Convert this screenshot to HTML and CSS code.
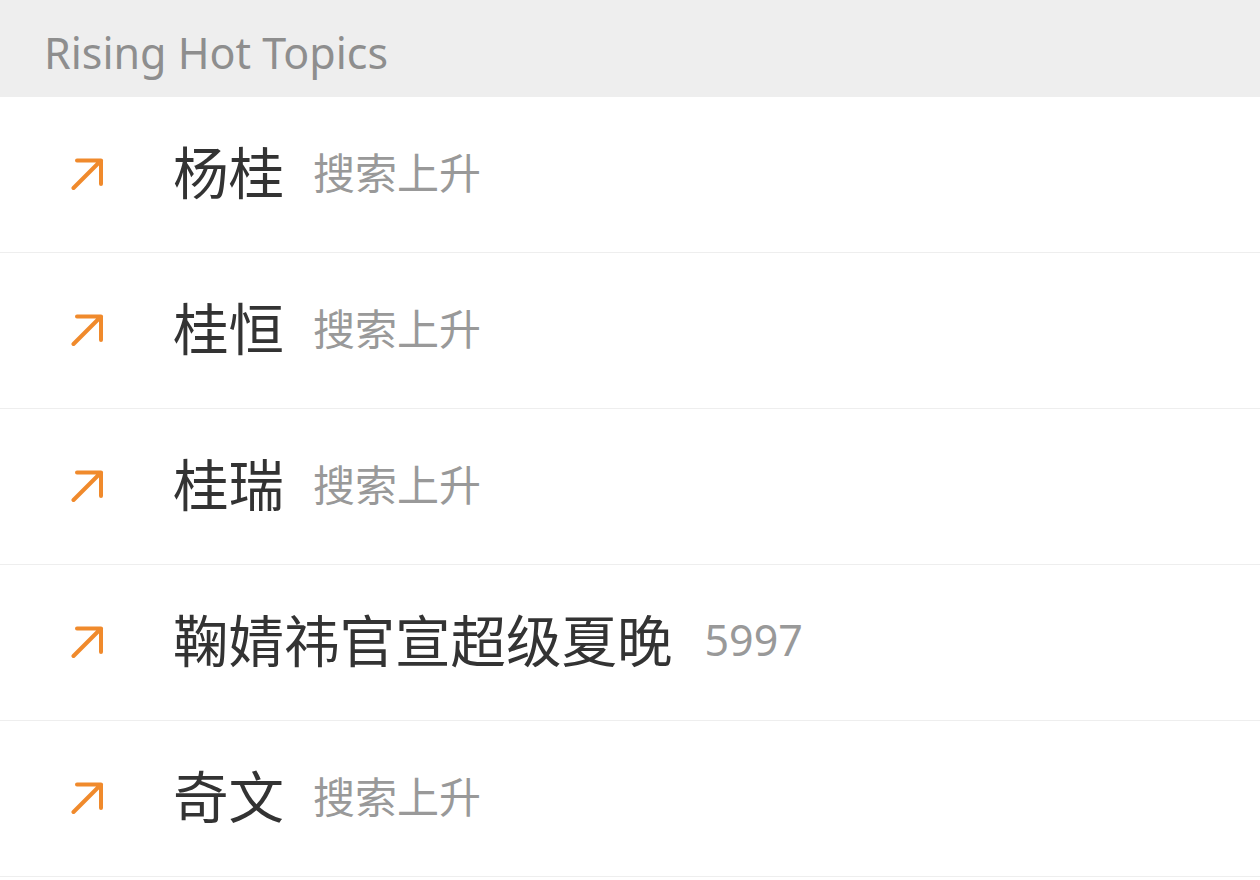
FILE: index.html
```html
<!DOCTYPE html>
<html lang="zh-CN">
<head>
    <meta charset="UTF-8">
    <meta name="viewport" content="width=device-width, initial-scale=1.0">
    <title>Rising Hot Topics</title>
    <link rel="stylesheet" href="styles.css">
</head>
<body>
    <header class="section-header">
        <h1>Rising Hot Topics</h1>
    </header>

    <ul class="topic-list">
        <li class="topic">
            <svg class="topic-icon" viewBox="0 0 34 34"><path d="M6 2.5H30V26M30 2.5L2.5 30"/></svg>
            <span class="topic-title">杨桂</span>
            <span class="topic-note">搜索上升</span>
        </li>
        <li class="topic">
            <svg class="topic-icon" viewBox="0 0 34 34"><path d="M6 2.5H30V26M30 2.5L2.5 30"/></svg>
            <span class="topic-title">桂恒</span>
            <span class="topic-note">搜索上升</span>
        </li>
        <li class="topic">
            <svg class="topic-icon" viewBox="0 0 34 34"><path d="M6 2.5H30V26M30 2.5L2.5 30"/></svg>
            <span class="topic-title">桂瑞</span>
            <span class="topic-note">搜索上升</span>
        </li>
        <li class="topic">
            <svg class="topic-icon" viewBox="0 0 34 34"><path d="M6 2.5H30V26M30 2.5L2.5 30"/></svg>
            <span class="topic-title">鞠婧祎官宣超级夏晚</span>
            <span class="topic-note topic-count">5997</span>
        </li>
        <li class="topic">
            <svg class="topic-icon" viewBox="0 0 34 34"><path d="M6 2.5H30V26M30 2.5L2.5 30"/></svg>
            <span class="topic-title">奇文</span>
            <span class="topic-note">搜索上升</span>
        </li>
    </ul>
</body>
</html>
```

FILE: styles.css
```css
body {
    font-family: "Noto Sans", "Noto Sans CJK SC", sans-serif;
    margin: 0;
    padding: 0;
    background-color: #fff;
    color: #333;
}
.section-header {
    background-color: #eeeeee;
    height: 97px;
    box-sizing: border-box;
    padding: 8px 44px 0;
    display: flex;
    align-items: center;
}
.section-header h1 {
    margin: 0;
    font-size: 43px;
    font-weight: 400;
    color: #8e8e8e;
    line-height: 1;
}
.topic-list {
    list-style: none;
    margin: 0;
    padding: 0;
}
.topic {
    height: 155px;
    border-bottom: 1px solid #eeeeee;
    display: flex;
    align-items: center;
    padding-left: 71px;
}
.topic-icon {
    width: 34px;
    height: 34px;
    margin-right: 68px;
    fill: none;
    stroke: #f08a2c;
    stroke-width: 4;
    stroke-linecap: round;
    stroke-linejoin: round;
}
.topic-title {
    font-family: "Noto Sans CJK SC", sans-serif;
    font-size: 55.5px;
    color: #333;
    line-height: 1;
    margin-bottom: 7px;
}
.topic-note {
    font-family: "Noto Sans CJK SC", sans-serif;
    font-size: 42px;
    color: #999;
    margin-left: 29px;
    line-height: 1;
    margin-bottom: 7px;
}
.topic-count {
    font-family: "Noto Sans", sans-serif;
    font-size: 43px;
    margin-left: 32px;
}
```
